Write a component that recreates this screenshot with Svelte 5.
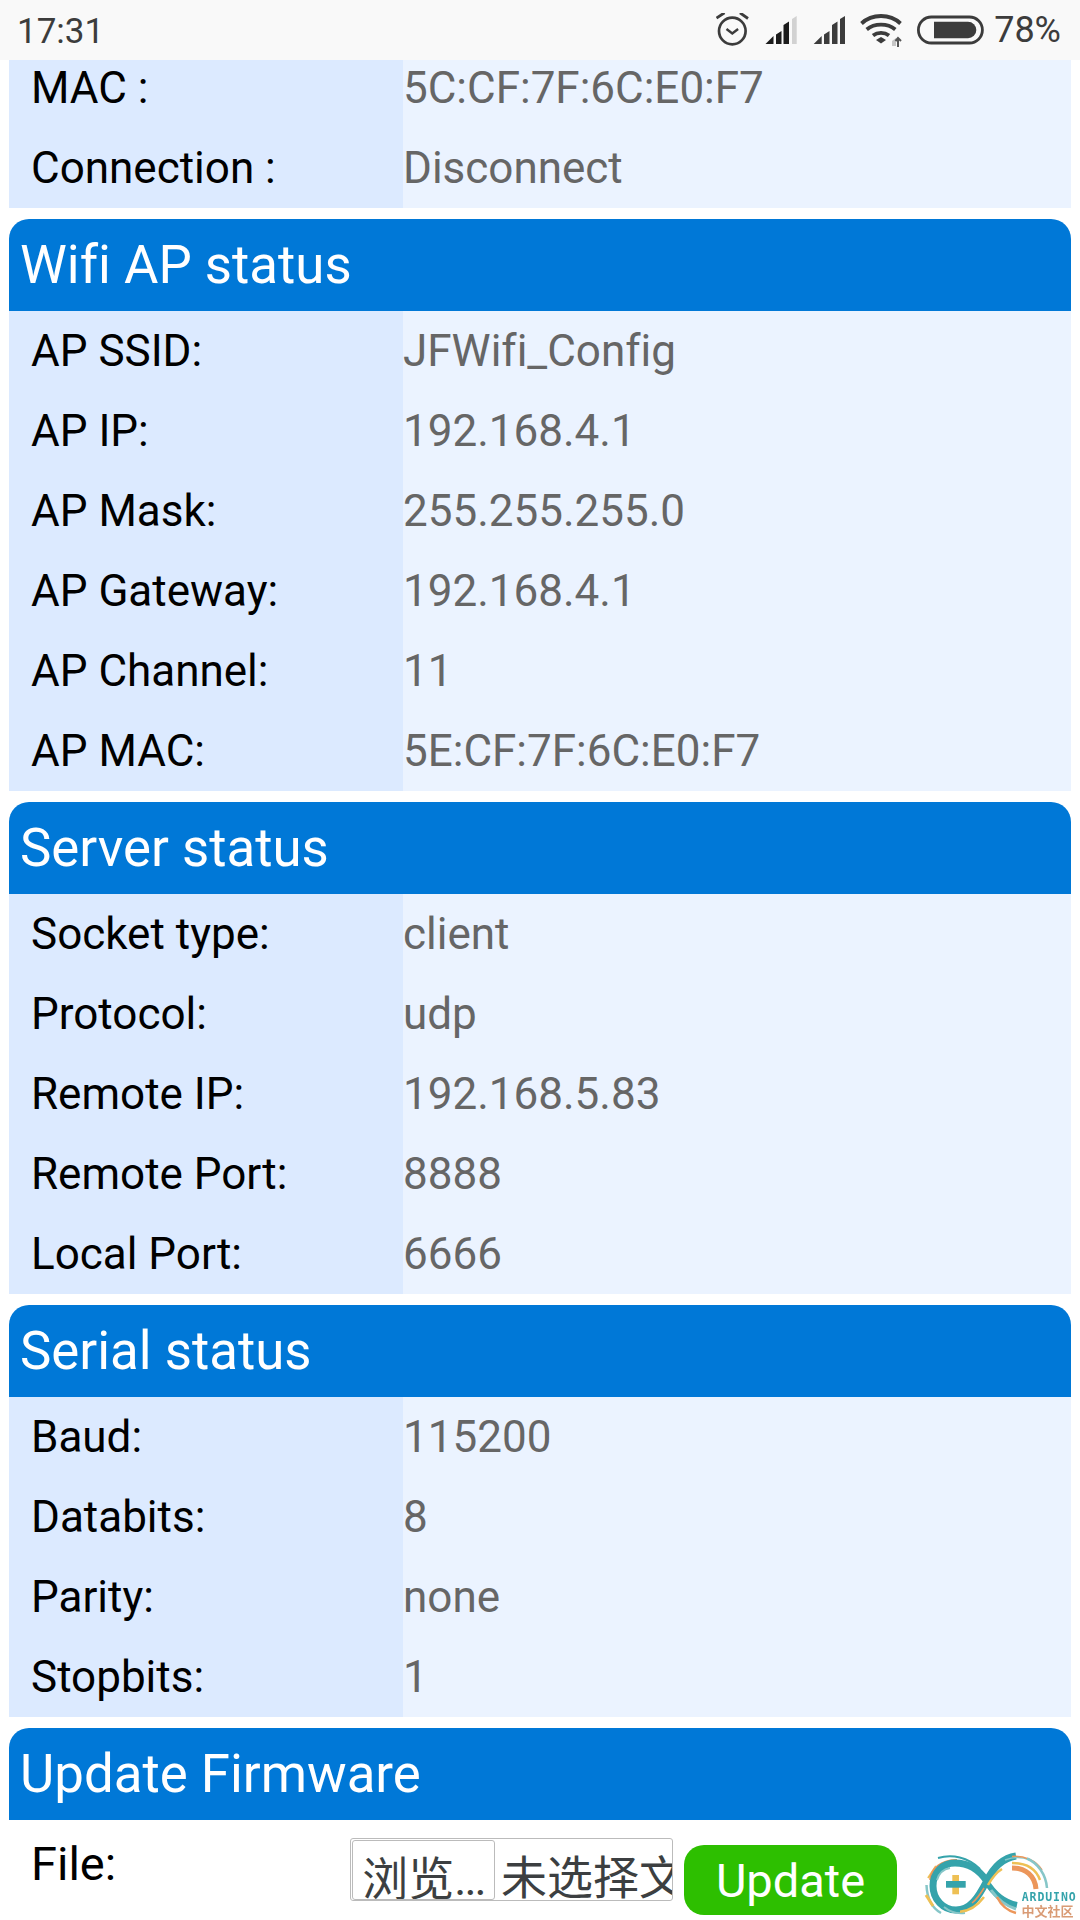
<script>
  const top = [["MAC :", "5C:CF:7F:6C:E0:F7"], ["Connection :", "Disconnect"]];
  const sections = [
    { title: "Wifi AP status", rows: [["AP SSID:", "JFWifi_Config"], ["AP IP:", "192.168.4.1"], ["AP Mask:", "255.255.255.0"], ["AP Gateway:", "192.168.4.1"], ["AP Channel:", "11"], ["AP MAC:", "5E:CF:7F:6C:E0:F7"]] },
    { title: "Server status", rows: [["Socket type:", "client"], ["Protocol:", "udp"], ["Remote IP:", "192.168.5.83"], ["Remote Port:", "8888"], ["Local Port:", "6666"]] },
    { title: "Serial status", rows: [["Baud:", "115200"], ["Databits:", "8"], ["Parity:", "none"], ["Stopbits:", "1"]] }
  ];
</script>

<div class="screen">
  <header class="status">
    <span class="time">17:31</span>
    <div class="icons">
      <svg class="alarm" width="34" height="34" viewBox="716 14 34 34" fill="none" stroke="#3c3c3c">
        <circle cx="732.300" cy="32" r="13.300" stroke-width="2.700"/>
        <path d="M726.500 30l5.800 4.500 5.800-4.500" stroke-width="2.400"/>
        <path d="M716.500 19l8-5.200M748 19.500l-8-5.700" stroke-width="2.800"/>
      </svg>
      <svg class="sig" width="32" height="30" viewBox="765 14 32 30">
        <path d="M765.500 43L773.500 35V43ZM776 33.500L781.500 30V43H776ZM783.500 24L789 20.500V43H783.500Z" fill="#1c1c1c"/>
        <path d="M792 18L796.700 15V43H792Z" fill="#d2d2d2"/>
      </svg>
      <svg class="sig second" width="32" height="30" viewBox="812 14 32 30">
        <path d="M812.700 43L820.700 35V43ZM823 33.500L828.500 30V43H823ZM831 24L836.500 20.500V43H831ZM839 18L844 15V43H839Z" fill="#3c3c3c"/>
      </svg>
      <svg class="wifi" width="46" height="34" viewBox="860 14 46 34" fill="none">
        <path d="M861.500 24.500C872 14.500 890 14.500 900.500 24.500" stroke="#3c3c3c" stroke-width="3.800"/>
        <path d="M866.700 30.500C874.500 24 887.500 24 895.300 30.500" stroke="#3c3c3c" stroke-width="3.800"/>
        <path d="M873 36.500C877.500 33 884.500 33 889 36.500" stroke="#3c3c3c" stroke-width="3.800"/>
        <path d="M876 41L881 38L886 41L881 44.500Z" fill="#3c3c3c"/>
        <path d="M892 47V42L896 39V47Z" fill="#c6c6c6"/>
        <path d="M898 48V40M895.500 42L898 39L901 42" stroke="#555" stroke-width="2"/>
      </svg>
      <svg class="battery" width="67" height="30" viewBox="917 15 67 30" fill="none">
        <rect x="918.400" y="17" width="64" height="26" rx="13" stroke="#3c3c3c" stroke-width="2.800"/>
        <path d="M934 21.700H968a8.300 8.300 0 0 1 0 16.600H934Z" fill="#3c3c3c"/>
      </svg>
      <span class="pct">78%</span>
    </div>
  </header>

  <main class="page">
    <div class="inner">
      <div class="rows">
        {#each top as [k, v]}
          <div class="row"><div class="key">{k}</div><div class="val">{v}</div></div>
        {/each}
      </div>

      {#each sections as s}
        <h2 class="title">{s.title}</h2>
        <div class="rows">
          {#each s.rows as [k, v]}
            <div class="row"><div class="key">{k}</div><div class="val">{v}</div></div>
          {/each}
        </div>
      {/each}

      <h2 class="title">Update Firmware</h2>
      <div class="upload">
        <div class="file-label">File:</div>
        <div class="file">
          <span class="browse">浏览<span class="dots">...</span></span>
          <span class="none">未选择文件。</span>
        </div>
        <button class="update">Update</button>
        <svg class="logo" width="160" height="75" viewBox="920 1845 160 75" fill="none">
          <path d="M926.500 1885C927 1898 932 1908 941 1913" stroke="#86c6c8" stroke-width="2.500"/>
          <path d="M926 1895L933 1906" stroke="#eec054" stroke-width="3"/>
          <path d="M928 1878L936 1866" stroke="#eec054" stroke-width="2"/>
          <path d="M938 1858C952 1854 968 1857 980 1869" stroke="#35a3ab" stroke-width="2"/>
          <path d="M931 1880C932 1869 942 1861 957 1861" stroke="#ec965a" stroke-width="4"/>
          <path d="M986.700 1881C978 1868 968 1863 955 1863C942 1863 933 1873 933 1886C933 1899 943 1910 956 1910C970 1910 978 1898 986.700 1881C994 1866 1003 1858 1016 1856" stroke="#35a3ab" stroke-width="7"/>
          <path d="M937 1880C939 1873 944 1869 950 1868" stroke="#86c6c8" stroke-width="2"/>
          <path d="M944 1907C950 1912 957 1914 965 1913" stroke="#86c6c8" stroke-width="2"/>
          <path d="M960 1911.700C970 1911 978 1905 984 1897" stroke="#eec054" stroke-width="2.500"/>
          <path d="M972 1903C977 1899 981 1893 984 1888" stroke="#ec965a" stroke-width="1.500"/>
          <path d="M986 1881C992 1891 1002 1902 1017 1905" stroke="#35a3ab" stroke-width="6"/>
          <path d="M991 1890C998 1900 1006 1906 1016 1909" stroke="#86c6c8" stroke-width="3"/>
          <path d="M997 1897C1002 1907 1008 1911 1016 1913" stroke="#ec965a" stroke-width="2.500"/>
          <path d="M988 1885C992 1878 997 1872 1002 1869" stroke="#eec054" stroke-width="2.500"/>
          <path d="M1005 1860C1010 1858 1020 1856 1030 1860" stroke="#86c6c8" stroke-width="1.500"/>
          <path d="M1012 1856.500C1024 1855.500 1036 1860 1042 1870" stroke="#ec965a" stroke-width="1.500"/>
          <path d="M1027 1858.500C1038 1863 1046 1875 1047 1888" stroke="#86c6c8" stroke-width="2.500"/>
          <path d="M1012 1863C1026 1863 1036 1869 1040 1880" stroke="#eec054" stroke-width="2.500"/>
          <path d="M1012 1868C1026 1868 1035 1876 1036 1889" stroke="#ec965a" stroke-width="5"/>
          <rect x="952.300" y="1875" width="6.700" height="19.300" fill="#eec054"/>
          <rect x="946" y="1881" width="19.700" height="6.700" fill="#35a3ab"/>
          <text class="ard" x="1021.700" y="1901" textLength="54">ARDUINO</text>
          <text class="cn" x="1021.500" y="1915.500" textLength="52">中文社区</text>
        </svg>
      </div>
    </div>
  </main>
</div>

<style>
  :global(body) {
    margin: 0;
    background: #fff;
  }
  .screen {
    width: 1080px;
    height: 1920px;
    overflow: hidden;
    display: flex;
    flex-direction: column;
    font-family: Roboto, "Noto Sans CJK SC", sans-serif;
    font-variant-ligatures: none;
  }
  .status {
    flex: 0 0 60px;
    height: 60px;
    background: #f9f9f9;
    display: flex;
    align-items: center;
    justify-content: space-between;
    padding: 0 19px 0 17px;
    color: #3c3c3c;
    box-sizing: border-box;
  }
  .time {
    font-size: 35px;
    position: relative;
    top: 1px;
  }
  .icons {
    display: flex;
    align-items: center;
  }
  .icons svg {
    display: block;
  }
  .sig {
    margin-left: 15px;
  }
  .sig.second {
    margin-left: 16px;
  }
  .wifi {
    margin-left: 15px;
  }
  .battery {
    margin-left: 11px;
  }
  .pct {
    margin-left: 10px;
    font-size: 36px;
  }
  .page {
    flex: 1;
    min-height: 0;
    overflow: hidden;
  }
  .inner {
    margin-top: -12px;
    padding: 0 9px;
  }
  .rows {
    background: #ebf3ff;
  }
  .row {
    display: grid;
    grid-template-columns: 394px 1fr;
    height: 80px;
    font-size: 44px;
    line-height: 80px;
  }
  .key {
    background: #dceaff;
    color: #000;
    padding-left: 22px;
  }
  .val {
    color: #666;
  }
  .title {
    margin: 11px 0 0;
    height: 92px;
    line-height: 92px;
    background: #0078d7;
    color: #fff;
    font-weight: 400;
    font-size: 52.800px;
    padding-left: 11px;
    border-radius: 20px 20px 0 0;
  }
  .upload {
    display: flex;
    align-items: flex-start;
    height: 100px;
  }
  .file-label {
    flex: none;
    width: 341px;
    padding: 19px 0 0 22px;
    box-sizing: border-box;
    font-size: 47px;
    line-height: 50px;
    color: #000;
  }
  .file {
    flex: none;
    margin-top: 18px;
    width: 323px;
    height: 63px;
    box-sizing: border-box;
    border: 1px solid #bbb;
    border-radius: 3px;
    display: flex;
    overflow: hidden;
    white-space: nowrap;
    color: #3c3f41;
    font-size: 46px;
    font-family: Roboto, "Noto Sans CJK SC", sans-serif;
    line-height: 78px;
  }
  .browse {
    flex: 0 0 143px;
    box-sizing: border-box;
    height: 60px;
    margin: 1px 0 0 1px;
    border: 1px solid #bbb;
    border-radius: 3px;
    text-align: center;
    line-height: 76px;
    background: #fff;
    overflow: hidden;
  }
  .dots {
    letter-spacing: -2px;
  }
  .none {
    padding-left: 6px;
  }
  .update {
    flex: none;
    margin: 25px 0 0 11px;
    width: 213px;
    height: 70px;
    border: 0;
    border-radius: 20px;
    background: #2dbf00;
    color: #fff;
    font: 400 47px Roboto, sans-serif;
    padding: 0;
  }
  .logo {
    flex: none;
    display: block;
    margin: 25px 0 0 23px;
    filter: blur(0.4px);
  }
  .ard {
    font: 700 11.500px "DejaVu Sans Mono", monospace;
    fill: #35a3ab;
  }
  .cn {
    font: 700 13px "Noto Sans CJK SC", sans-serif;
    fill: #d99b75;
  }
</style>
